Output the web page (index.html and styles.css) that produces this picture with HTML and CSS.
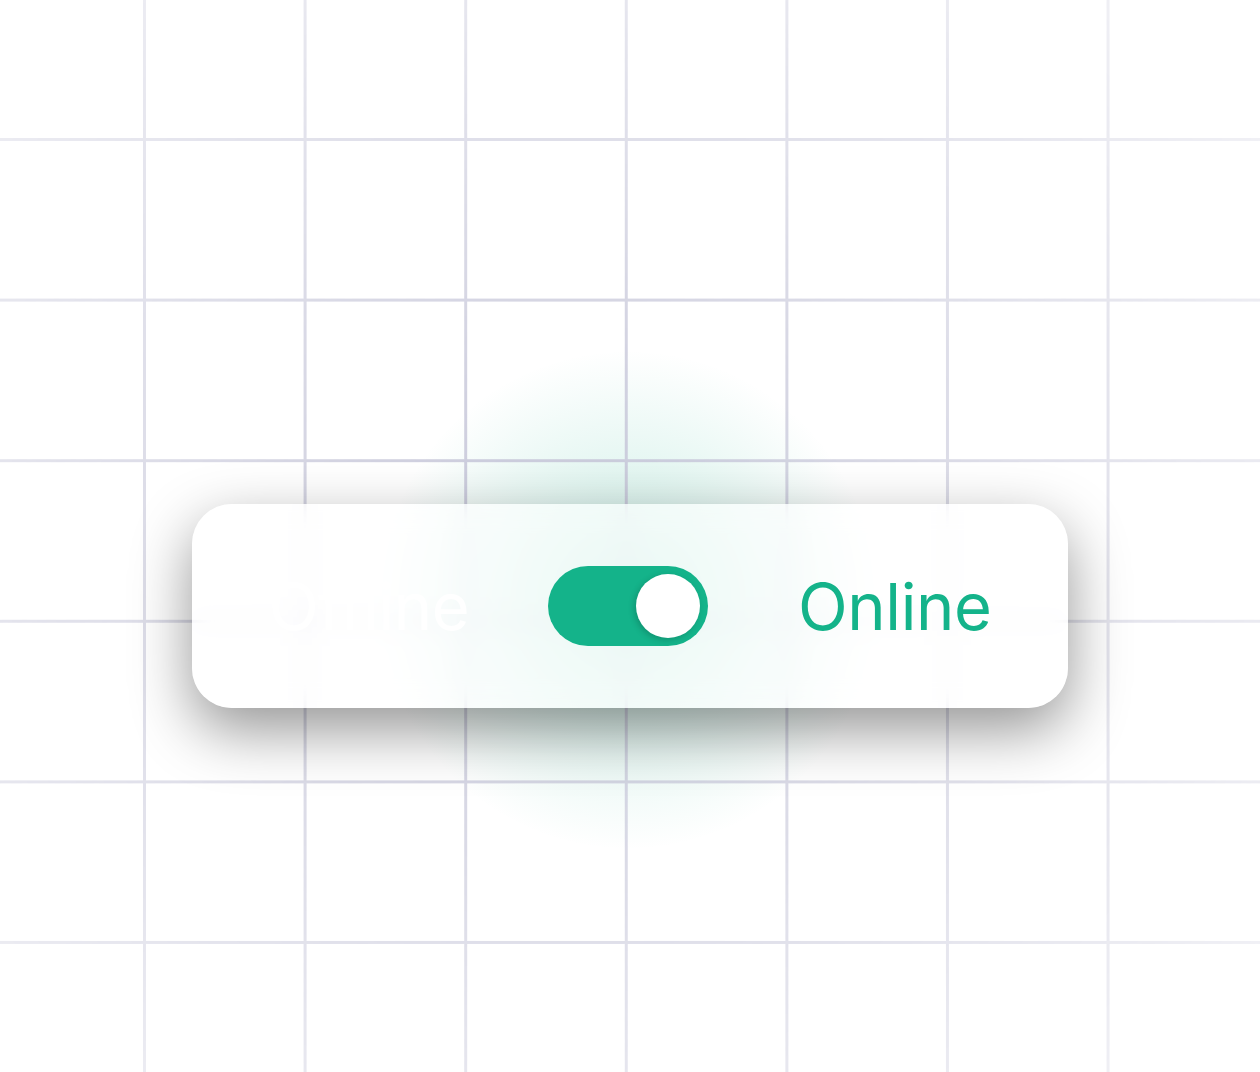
FILE: index.html
```html
<!DOCTYPE html>
<html lang="en">
<head>
<meta charset="utf-8">
<title>Status toggle</title>
<link rel="stylesheet" href="styles.css">
</head>
<body>
<div class="grid" aria-hidden="true"></div>
<main class="stage">
  <div class="card">
    <span class="label label-off">Offline</span>
    <button class="switch is-on" type="button" role="switch" aria-checked="true" aria-label="Status">
      <span class="knob"></span>
    </button>
    <span class="label label-on">Online</span>
  </div>
</main>
</body>
</html>
```
FILE: styles.css
```css
html, body {
  margin: 0;
  padding: 0;
  width: 1260px;
  height: 1072px;
  overflow: hidden;
}

body {
  position: relative;
  font-family: Inter, Roboto, "Liberation Sans", sans-serif;
  background:
    radial-gradient(circle 250px at 628px 600px, rgba(20, 179, 138, 0.24) 0%, rgba(20, 179, 138, 0.13) 45%, rgba(20, 179, 138, 0) 100%),
    #ffffff;
}

.grid {
  position: absolute;
  inset: 0;
  background-image:
    linear-gradient(to right, #c8c8da 0, #c8c8da 3px, transparent 3px),
    linear-gradient(to bottom, #c8c8da 0, #c8c8da 3px, transparent 3px);
  background-size: 160.6px 160.6px;
  background-position: 143px 138px;
  -webkit-mask-image: radial-gradient(ellipse 900px 800px at 560px 540px, rgba(0,0,0,1) 0%, rgba(0,0,0,0.55) 55%, rgba(0,0,0,0.22) 100%);
  mask-image: radial-gradient(ellipse 900px 800px at 560px 540px, rgba(0,0,0,1) 0%, rgba(0,0,0,0.55) 55%, rgba(0,0,0,0.22) 100%);
}

.stage {
  position: relative;
  height: 100%;
  display: flex;
  align-items: flex-start;
  padding: 504px 0 0 192px;
  box-sizing: border-box;
}

.card {
  width: 876px;
  height: 204px;
  box-sizing: border-box;
  border-radius: 40px;
  background: rgba(255, 255, 255, 0.62);
  -webkit-backdrop-filter: blur(12px);
  backdrop-filter: blur(12px);
  box-shadow: 0 22px 60px rgba(0, 0, 0, 0.42);
  display: flex;
  align-items: center;
  padding: 0 0 0 77px;
}

.label {
  font-size: 65px;
  font-weight: 400;
  line-height: 1;
  letter-spacing: -0.4px;
  white-space: nowrap;
}

.label-off {
  width: 200px;
  margin-right: 79px;
  color: rgba(255, 255, 255, 0.95);
}

.label-on {
  color: #14b38a;
  margin-left: 90px;
}

.switch {
  flex: 0 0 auto;
  width: 160px;
  height: 80px;
  border: 0;
  padding: 8px;
  border-radius: 40px;
  background: #14b38a;
  display: flex;
  justify-content: flex-end;
  align-items: center;
  box-sizing: border-box;
  cursor: pointer;
}

.knob {
  width: 64px;
  height: 64px;
  border-radius: 50%;
  background: #ffffff;
  box-shadow: -2px 2px 6px rgba(0, 0, 0, 0.18);
}
```
